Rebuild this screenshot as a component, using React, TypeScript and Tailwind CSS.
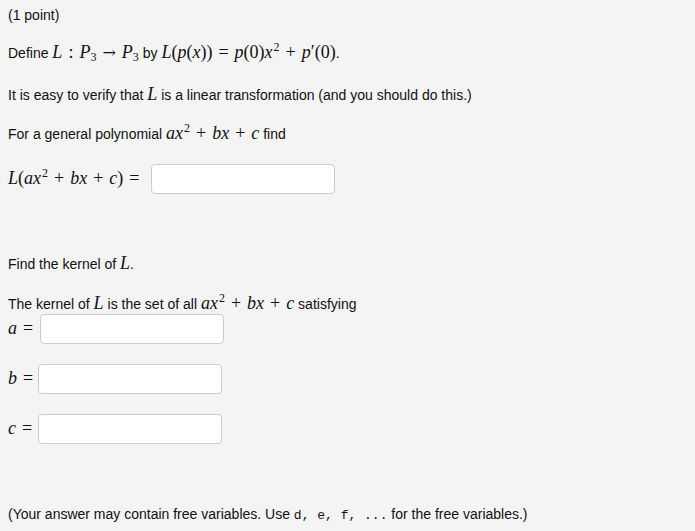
import React from "react";

const M = ({ children }: { children: React.ReactNode }) => (
  <span className="italic text-[18px] leading-none" style={{ fontFamily: '"Liberation Serif", "DejaVu Serif", serif' }}>
    {children}
  </span>
);
const R = ({ children }: { children: React.ReactNode }) => (
  <span className="not-italic">{children}</span>
);
const Sup = ({ children }: { children: React.ReactNode }) => (
  <span className="not-italic text-[12px] relative -top-[7px] ml-[1px]">{children}</span>
);
const Sub = ({ children }: { children: React.ReactNode }) => (
  <span className="not-italic text-[12px] relative top-[3px]">{children}</span>
);
const Op = ({ children }: { children: React.ReactNode }) => (
  <span className="not-italic mx-[6px]">{children}</span>
);
const Arrow = () => (
  <span className="not-italic mx-[6px] text-[16px]" style={{ fontFamily: '"DejaVu Serif", serif' }}>→</span>
);

const Box = () => (
  <div className="h-[30px] w-[184px] bg-white border border-[#cccccc] rounded-[4px]" />
);

export default function App() {
  return (
    <div
      className="bg-[#f4f4f4] w-full h-[531px] px-2 pt-[5px] text-[14px] text-[#111] overflow-hidden"
      style={{ fontFamily: '"Liberation Sans", Arial, sans-serif' }}
    >
      <div className="h-5 leading-5">(1 point)</div>
      <div className="h-5 leading-5 mt-[18px] whitespace-nowrap">
        Define <M>L<Op>:</Op>P<Sub>3</Sub><Arrow />P<Sub>3</Sub></M> by{" "}
        <M>
          L<R>(</R>p<R>(</R>x<R>))</R><Op>=</Op>p<R>(0)</R>x<Sup>2</Sup><Op>+</Op>p<R>′(0)</R>
        </M>
        .
      </div>
      <div className="h-5 leading-5 mt-[22px] whitespace-nowrap">
        It is easy to verify that <M>L</M> is a linear transformation (and you should do this.)
      </div>
      <div className="h-5 leading-5 mt-[19px] whitespace-nowrap">
        For a general polynomial <M>ax<Sup>2</Sup><Op>+</Op>bx<Op>+</Op>c</M> find
      </div>
      <div className="flex items-center mt-[20px] h-[30px]">
        <span className="w-[143px] whitespace-nowrap">
          <M>
            L<R>(</R>ax<Sup>2</Sup><Op>+</Op>bx<Op>+</Op>c<R>)</R><Op>=</Op>
          </M>
        </span>
        <Box />
      </div>
      <div className="h-5 leading-5 mt-[60px] whitespace-nowrap">
        Find the kernel of <M>L</M>.
      </div>
      <div className="h-5 leading-5 mt-[20px] whitespace-nowrap">
        The kernel of <M>L</M> is the set of all <M>ax<Sup>2</Sup><Op>+</Op>bx<Op>+</Op>c</M> satisfying
      </div>
      <div className="flex items-center h-[30px]">
        <span className="w-[32px] whitespace-nowrap"><M>a<Op>=</Op></M></span>
        <Box />
      </div>
      <div className="flex items-center h-[30px] mt-[20px]">
        <span className="w-[30px] whitespace-nowrap"><M>b<Op>=</Op></M></span>
        <Box />
      </div>
      <div className="flex items-center h-[30px] mt-[20px]">
        <span className="w-[30px] whitespace-nowrap"><M>c<Op>=</Op></M></span>
        <Box />
      </div>
      <div className="h-5 leading-5 mt-[60px] whitespace-nowrap">
        (Your answer may contain free variables. Use{" "}
        <span className="text-[13px]" style={{ fontFamily: '"Liberation Mono", monospace' }}>d, e, f, ...</span>{" "}
        for the free variables.)
      </div>
    </div>
  );
}
